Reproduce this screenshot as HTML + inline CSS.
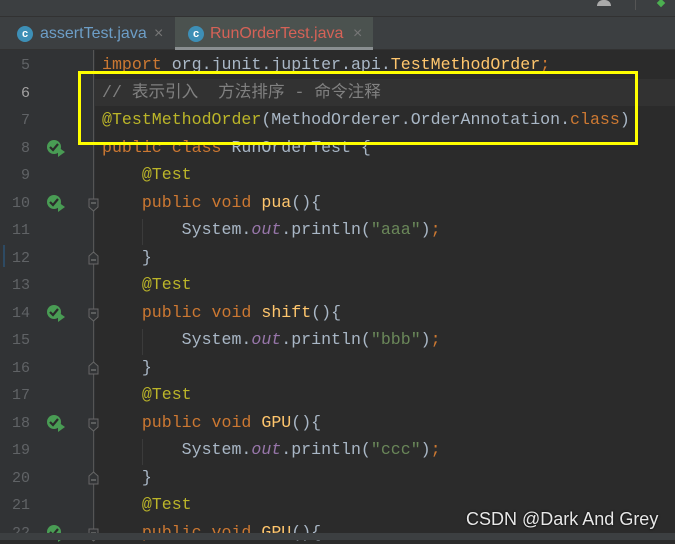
<!DOCTYPE html>
<html><head><meta charset="utf-8"><style>
*{margin:0;padding:0;box-sizing:border-box}
body{width:675px;height:540px;overflow:hidden;background:#2b2b2b;position:relative;font-family:"Liberation Mono","Noto Sans CJK SC",monospace}
.top{position:absolute;left:0;top:0;width:675px;height:17px;background:#3c3f41;border-bottom:1px solid #323232}
.tabs{position:absolute;left:0;top:17px;width:675px;height:33px;background:#3c3f41;border-bottom:1px solid #323232}
.tab{position:absolute;top:0;height:33px;font-family:"Liberation Sans",sans-serif;font-size:16px;line-height:33px;white-space:nowrap}
.ci{position:absolute;top:9px;width:16px;height:16px;border-radius:50%;background:#3d8fb6;color:#fff;font-size:11px;line-height:16px;text-align:center;font-weight:bold}
.gut{position:absolute;left:0;top:50px;width:95px;height:483px;background:#313335}
.ln{position:absolute;left:0;width:30px;text-align:right;font-size:15px;line-height:20px;color:#606366}
.code{position:absolute;left:102px;font-size:16.6px;line-height:20px;color:#a9b7c6;white-space:pre}
.k{color:#cc7832}.a{color:#bbb529}.c{color:#808080}.s{color:#6a8759}.o{color:#9876aa;font-style:italic}.m{color:#ffc66d}
.bot{position:absolute;left:0;top:533px;width:675px;height:7px;background:#3c3f41}
.run{position:absolute;left:46px;width:20px;height:20px}
.fold{position:absolute;left:88px;width:11px;height:14px}
</style></head><body>
<div class="top"><div style="position:absolute;left:597px;top:0;width:14px;height:6px;background:#aaa;border-radius:6px 6px 0 0"></div><div style="position:absolute;left:635px;top:0;width:1px;height:10px;background:#555"></div><div style="position:absolute;left:658px;top:0;width:6px;height:6px;background:#4caf50;transform:rotate(45deg)"></div></div>
<div class="tabs">
<div class="tab" style="left:0;width:175px"><div class="ci" style="left:17px">c</div><span style="position:absolute;left:40px;color:#6d9ec7">assertTest.java</span><span style="position:absolute;left:154px;color:#777">×</span></div>
<div class="tab" style="left:175px;width:198px;background:#4b524f;border-bottom:3px solid #8a8f91"><div class="ci" style="left:13px">c</div><span style="position:absolute;left:35px;color:#d66257">RunOrderTest.java</span><span style="position:absolute;left:178px;color:#777">×</span></div>
</div>
<div class="gut"></div>
<div style="position:absolute;left:95px;top:79px;width:580px;height:27px;background:#323232"></div>
<div style="position:absolute;left:93px;top:50px;width:1px;height:483px;background:#555"></div>
<div style="position:absolute;left:3px;top:245px;width:2px;height:22px;background:#2d4a63"></div>
<div id="L"></div>
<div style="position:absolute;left:78px;top:71px;width:560px;height:74px;border:3px solid #ffff00"></div>
<div style="position:absolute;left:466px;top:509px;font-family:'Liberation Sans',sans-serif;font-size:18px;color:#e8e8e8;text-shadow:0 0 2px #000">CSDN @Dark And Grey</div>
<div class="bot"></div>
<script>
var lines=[
[5,'<span class="k">import</span> org.junit.jupiter.api.<span class="m">TestMethodOrder</span><span class="k">;</span>'],
[6,'<span class="c">// 表示引入  方法排序 - 命令注释</span>'],
[7,'<span class="a">@TestMethodOrder</span>(MethodOrderer.OrderAnnotation.<span class="k">class</span>)'],
[8,'<span class="k">public class</span> RunOrderTest {',1],
[9,'    <span class="a">@Test</span>'],
[10,'    <span class="k">public void</span> <span class="m">pua</span>(){',1,1],
[11,'        System.<span class="o">out</span>.println(<span class="s">"aaa"</span>)<span class="k">;</span>',0,0,1],
[12,'    }',0,2],
[13,'    <span class="a">@Test</span>'],
[14,'    <span class="k">public void</span> <span class="m">shift</span>(){',1,1],
[15,'        System.<span class="o">out</span>.println(<span class="s">"bbb"</span>)<span class="k">;</span>',0,0,1],
[16,'    }',0,2],
[17,'    <span class="a">@Test</span>'],
[18,'    <span class="k">public void</span> <span class="m">GPU</span>(){',1,1],
[19,'        System.<span class="o">out</span>.println(<span class="s">"ccc"</span>)<span class="k">;</span>',0,0,1],
[20,'    }',0,2],
[21,'    <span class="a">@Test</span>'],
[22,'    <span class="k">public void</span> <span class="m">GPU</span>(){',1,1]];
var h='';
lines.forEach(function(l,i){var y=52+i*27.5;
h+='<div class="ln" style="top:'+(y+4)+'px;'+(l[0]==6?'color:#a4a3a3':'')+'">'+l[0]+'</div>';
h+='<div class="code" style="top:'+(y+3)+'px">'+l[1]+'</div>';
if(l[2])h+='<svg class="run" style="top:'+(y+3)+'px" viewBox="0 0 20 20"><circle cx="8" cy="9" r="7" fill="#499c54"/><path d="M4 9l3 3 5-6" stroke="#2b2b2b" stroke-width="2.2" fill="none"/><path d="M12 9l7 5-7 5z" fill="#499c54"/></svg>';
if(l[3]==1)h+='<svg class="fold" style="top:'+(y+8)+'px" viewBox="0 0 11 14"><path d="M1 1h9v8l-4.5 4L1 9z" fill="#313335" stroke="#666"/><path d="M3 5h5" stroke="#888"/></svg>';
if(l[3]==2)h+='<svg class="fold" style="top:'+(y+6)+'px" viewBox="0 0 11 14"><path d="M1 13h9V5L5.5 1 1 5z" fill="#313335" stroke="#666"/><path d="M3 9h5" stroke="#888"/></svg>';
if(l[4])h+='<div style="position:absolute;left:142px;top:'+(y+2)+'px;width:1px;height:26px;background:#3b3b3b"></div>';
});
document.getElementById('L').innerHTML=h;
</script>
</body></html>
